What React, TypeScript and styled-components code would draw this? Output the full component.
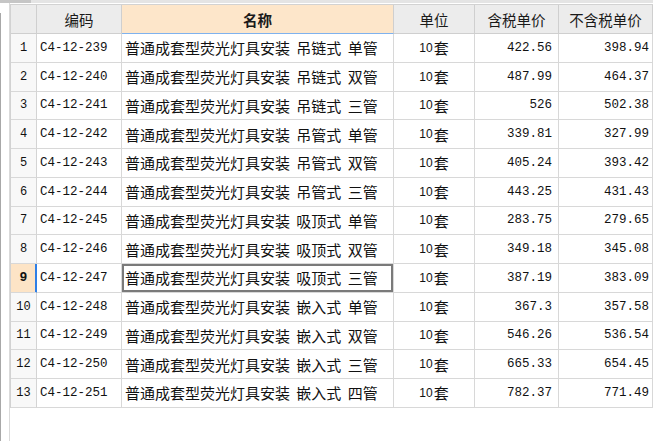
import React from "react";
import styled, { createGlobalStyle, css } from "styled-components";

const Global = createGlobalStyle`
  html, body { margin: 0; padding: 0; background: #ffffff; }
  #root { width: 667px; height: 441px; overflow: hidden; }
`;

const CJK = `"Noto Sans CJK SC", "Noto Sans", sans-serif`;
const MONO = `"Liberation Mono", "Noto Sans CJK SC", monospace`;

const Page = styled.div`
  width: 667px;
  height: 441px;
  display: flex;
  flex-direction: column;
  background: #fff;
`;

const TopStrip = styled.div`
  height: 3px;
  display: flex;
  flex: none;
`;

const Thumb = styled.div`
  width: 31px;
  background: #c6c6c6;
`;

const Track = styled.div`
  width: 622px;
  background: #e4e4e4;
`;

const Body = styled.div`
  flex: 1;
  display: flex;
  min-height: 0;
`;

const LeftRail = styled.div`
  width: 9px;
  flex: none;
  border-right: 1px solid #dadada;
  display: flex;
  flex-direction: column;
`;

const RailLine = styled.div`
  margin-top: 10px;
  flex: 1;
  border-left: 1px solid #a8a8a8;
`;

const TableWrap = styled.div`
  padding-top: 1px;
  flex: none;
`;

const Grid = styled.div`
  display: grid;
  grid-template-columns: 26px 85px 272px 81px 84px 94px;
  grid-template-rows: 29px repeat(13, 28.75px);
  border-left: 1px solid #d2d2d2;
  border-top: 1px solid #d2d2d2;
  width: 642px;
`;

const Cell = styled.div<{ $align?: "left" | "center" | "right"; $pr?: number }>`
  box-sizing: border-box;
  position: relative;
  border-right: 1px solid #d8d8d8;
  border-bottom: 1px solid #d8d8d8;
  display: flex;
  align-items: center;
  justify-content: ${(p) =>
    p.$align === "right" ? "flex-end" : p.$align === "center" ? "center" : "flex-start"};
  padding: 0 ${(p) => (p.$pr ?? 3)}px 0 3px;
  color: #111;
  white-space: pre;
  overflow: hidden;
`;

const HeadCell = styled(Cell)<{ $active?: boolean }>`
  background: ${(p) => (p.$active ? "#fde6ca" : "#ececec")};
  border-right-color: #cfcfcf;
  border-bottom-color: #cfcfcf;
  font-family: ${CJK};
  font-size: 14.5px;
  font-weight: ${(p) => (p.$active ? 700 : 400)};
  color: #1a1a1a;
  ${(p) =>
    p.$active &&
    css`
      border-bottom-color: #7fb2ee;
    `}
`;

const RowNum = styled(Cell)<{ $sel?: boolean }>`
  background: ${(p) => (p.$sel ? "#fde4c6" : "#f8f8f8")};
  font-family: ${MONO};
  font-size: 12px;
  font-weight: ${(p) => (p.$sel ? 700 : 400)};
  border-right-color: ${(p) => (p.$sel ? "#2f7fe6" : "#d4d4d4")};
  ${(p) =>
    p.$sel &&
    css`
      box-shadow: inset -1px 0 0 #2f7fe6;
      font-size: 13px;
    `}
`;

const CodeCell = styled(Cell)`
  font-family: ${MONO};
  font-size: 12.5px;
`;

const NameCell = styled(Cell)<{ $sel?: boolean }>`
  font-family: ${CJK};
  font-size: 15px;
  word-spacing: 3px;
  ${(p) =>
    p.$sel &&
    css`
      box-shadow: inset 0 0 0 2px #7a7a7a;
    `}
`;

const UnitCell = styled(Cell)`
  font-family: ${CJK};
  font-size: 15px;
`;

const UnitNum = styled.span`
  font-family: "Liberation Sans", sans-serif;
  font-size: 12px;
  margin-right: 1px;
`;

const PriceCell = styled(Cell)`
  font-family: ${MONO};
  font-size: 12.5px;
`;

type Row = [string, string, string, string, string];

const rows: Row[] = [
  ["C4-12-239", "吊链式", "单管", "422.56", "398.94"],
  ["C4-12-240", "吊链式", "双管", "487.99", "464.37"],
  ["C4-12-241", "吊链式", "三管", "526", "502.38"],
  ["C4-12-242", "吊管式", "单管", "339.81", "327.99"],
  ["C4-12-243", "吊管式", "双管", "405.24", "393.42"],
  ["C4-12-244", "吊管式", "三管", "443.25", "431.43"],
  ["C4-12-245", "吸顶式", "单管", "283.75", "279.65"],
  ["C4-12-246", "吸顶式", "双管", "349.18", "345.08"],
  ["C4-12-247", "吸顶式", "三管", "387.19", "383.09"],
  ["C4-12-248", "嵌入式", "单管", "367.3", "357.58"],
  ["C4-12-249", "嵌入式", "双管", "546.26", "536.54"],
  ["C4-12-250", "嵌入式", "三管", "665.33", "654.45"],
  ["C4-12-251", "嵌入式", "四管", "782.37", "771.49"],
];

const SELECTED = 9;

export default function App() {
  return (
    <>
      <Global />
      <Page>
        <TopStrip>
          <Thumb />
          <Track />
        </TopStrip>
        <Body>
          <LeftRail>
            <RailLine />
          </LeftRail>
          <TableWrap>
            <Grid>
              <HeadCell $align="center" />
              <HeadCell $align="center">编码</HeadCell>
              <HeadCell $align="center" $active>
                名称
              </HeadCell>
              <HeadCell $align="center">单位</HeadCell>
              <HeadCell $align="center">含税单价</HeadCell>
              <HeadCell $align="center">不含税单价</HeadCell>
              {rows.map((r, i) => {
                const n = i + 1;
                const sel = n === SELECTED;
                return (
                  <React.Fragment key={r[0]}>
                    <RowNum $align="center" $sel={sel}>
                      {n}
                    </RowNum>
                    <CodeCell>{r[0]}</CodeCell>
                    <NameCell $sel={sel}>{`普通成套型荧光灯具安装 ${r[1]} ${r[2]}`}</NameCell>
                    <UnitCell $align="center">
                      <UnitNum>10</UnitNum>套
                    </UnitCell>
                    <PriceCell $align="right" $pr={6}>
                      {r[3]}
                    </PriceCell>
                    <PriceCell $align="right" $pr={3}>
                      {r[4]}
                    </PriceCell>
                  </React.Fragment>
                );
              })}
            </Grid>
          </TableWrap>
        </Body>
      </Page>
    </>
  );
}
